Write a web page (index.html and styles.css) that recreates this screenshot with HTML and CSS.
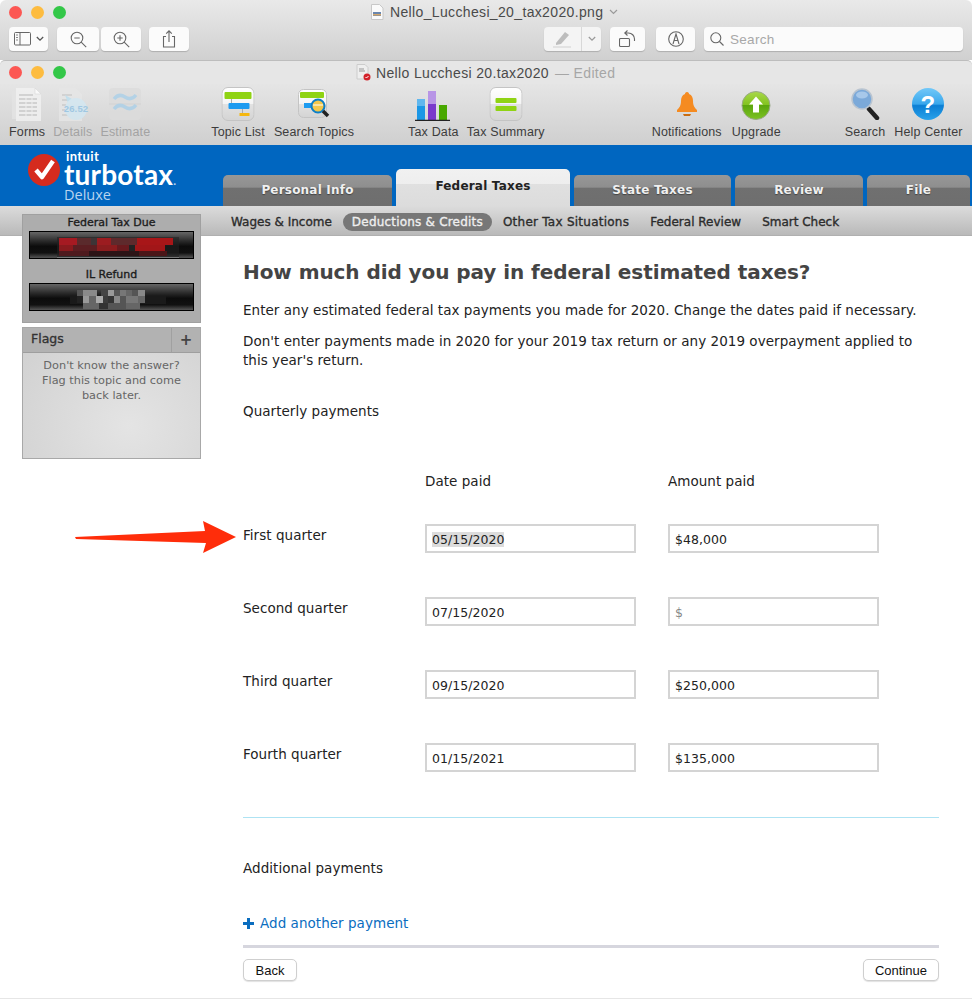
FILE: index.html
```html
<!DOCTYPE html>
<html lang="en">
  <head>
    <meta charset="UTF-8" />
    <meta name="viewport" content="width=device-width, initial-scale=1.0" />
    <title>Federal estimated taxes</title>
    <link rel="stylesheet" href="styles.css">
  </head>
  <body>
    <!-- back window: preview -->
    <div class="preview-window">
      <div class="title-row preview-title">
        <div class="lights"><i class="red"></i><i class="yellow"></i><i class="green"></i></div>
        <svg class="doc-icon" width="14" height="16" viewBox="0 0 14 16"><path d="M1.5 .5h8l3.500 3.500v11.500h-11.500z" fill="#fafafa" stroke="#c8c8c8"/><path d="M3 8h8v4H3z" fill="#6a86ad"/><path d="M3 10h8v1.500H3z" fill="#d4a76a"/></svg>
        <span class="title-text">Nello_Lucchesi_20_tax2020.png</span>
        <svg class="title-chevron" width="9" height="6" viewBox="0 0 9 6"><path d="M1 1l3.500 3.500L8 1" fill="none" stroke="#9a9a9a" stroke-width="1.200"/></svg>
      </div>
      <div class="preview-tools">
        <div class="btn btn-sidebar">
          <svg width="18" height="14" viewBox="0 0 18 14"><rect x=".5" y=".5" width="16" height="12.500" rx="1" fill="none" stroke="#666"/><path d="M6 .5v12.500" stroke="#666"/><path d="M2 3h2M2 5.500h2M2 8h2" stroke="#888"/></svg>
          <svg width="8" height="6" viewBox="0 0 8 6"><path d="M.8 1l3.200 3.200L7.200 1" fill="none" stroke="#555" stroke-width="1.300"/></svg>
        </div>
        <div class="btn btn-zoom-out">
          <svg width="17" height="17" viewBox="0 0 17 17"><circle cx="7" cy="7" r="5.800" fill="none" stroke="#666" stroke-width="1.100"/><path d="M11.200 11.200l5 5M4.300 7h5.400" stroke="#666" stroke-width="1.100"/></svg>
        </div>
        <div class="btn btn-zoom-in">
          <svg width="17" height="17" viewBox="0 0 17 17"><circle cx="7" cy="7" r="5.800" fill="none" stroke="#666" stroke-width="1.100"/><path d="M11.200 11.200l5 5M4.300 7h5.400M7 4.300v5.400" stroke="#666" stroke-width="1.100"/></svg>
        </div>
        <div class="btn btn-share">
          <svg width="14" height="18" viewBox="0 0 14 18"><path d="M4 6.500H1.500v10.500h11V6.500H10M7 12V1M4.200 3.600L7 .8l2.800 2.800" fill="none" stroke="#666" stroke-width="1.100"/></svg>
        </div>
        <div class="btn btn-markup">
          <span class="markup-pen">
            <svg width="19" height="17" viewBox="0 0 19 17"><path d="M3 12L12 1l4 3-8 9-5 1z" fill="#bdbdbd"/><path d="M0 16h18" stroke="#d0d0d0"/></svg>
          </span>
          <span class="markup-arrow">
            <svg width="8" height="6" viewBox="0 0 8 6"><path d="M.8 1l3.200 3.200L7.200 1" fill="none" stroke="#999" stroke-width="1.200"/></svg>
          </span>
        </div>
        <div class="btn btn-rotate">
          <svg width="17" height="18" viewBox="0 0 17 18"><rect x=".5" y="8.500" width="10" height="8" rx="1" fill="none" stroke="#666" stroke-width="1.100"/><path d="M6 3h3.500a6 6 0 0 1 6 6v2M8.500 .5L5.800 3l2.700 2.500" fill="none" stroke="#666" stroke-width="1.100"/></svg>
        </div>
        <div class="btn btn-annotate">
          <svg width="16" height="16" viewBox="0 0 16 16"><circle cx="8" cy="8" r="7.300" fill="none" stroke="#666" stroke-width="1.100"/><path d="M5 13L8 3l3 10M6.300 9.500h3.400" fill="none" stroke="#666" stroke-width="1.100"/></svg>
        </div>
        <div class="btn btn-search">
          <svg width="14" height="14" viewBox="0 0 14 14"><circle cx="5.800" cy="5.800" r="5" fill="none" stroke="#666" stroke-width="1.100"/><path d="M9.500 9.500l4 4" stroke="#666" stroke-width="1.100"/></svg>
          <span>Search</span>
        </div>
      </div>
    </div>

    <!-- front window: turbotax -->
    <div class="tax-window">
      <div class="title-row tax-title">
        <div class="lights"><i class="red"></i><i class="yellow"></i><i class="green"></i></div>
        <svg class="tax-doc" width="15" height="17" viewBox="0 0 15 17"><path d="M1 .5h8l3 3V15H1z" fill="#eee" stroke="#ccc"/><path d="M3 5h5M3 7h6" stroke="#999"/><circle cx="11" cy="13" r="3.500" fill="#d3222a"/><path d="M9.500 13l1 1 2-2" fill="none" stroke="#fff"/></svg>
        <span class="title-text">Nello Lucchesi 20.tax2020</span>
        <span class="title-edited">&mdash; Edited</span>
      </div>

      <div class="toolbar">
        <div class="tool-group group-a">
          <div class="tool off-forms">
            <svg width="32" height="36" viewBox="0 0 32 36"><path d="M1 5h20v28H1z" fill="#e4e4e4"/><path d="M5 2h19l6 6v27H5z" fill="#f2f2f2"/><path d="M24 2l6 6h-6z" fill="#fff" stroke="#ccc" stroke-width=".5"/><path d="M8 9h14M8 13h18M8 17h18M8 21h18M8 25h18M8 29h18" stroke="#cfcfcf" stroke-width="2"/><path d="M15 12v18M21 12v18" stroke="#f2f2f2"/></svg>
            <span>Forms</span>
          </div>
          <div class="tool off">
            <svg width="32" height="36" viewBox="0 0 32 36"><path d="M2 2h17l6 6v27H2z" fill="#e6e6e6"/><path d="M5 9h10M5 14h10M5 19h8M5 24h8M5 29h14" stroke="#cfcfcf" stroke-width="2"/><path d="M8 9l14 8-8 8z" fill="#bcdff0"/><circle cx="19" cy="23" r="11" fill="#d3e8f3"/><text class="icon-figure" x="19" y="26">26.52</text></svg>
            <span>Details</span>
          </div>
          <div class="tool off">
            <svg width="32" height="32" viewBox="0 0 32 32"><rect width="32" height="32" rx="4" fill="#dcdcdc"/><path d="M0 16h32" stroke="#d0d0d0"/><path d="M5 11c4-5 8-4 11-2s7 3 11-2M5 21c4-5 8-4 11-2s7 3 11-2" fill="none" stroke="#a9cfe8" stroke-width="3.500"/></svg>
            <span>Estimate</span>
          </div>
        </div>
        <div class="tool-group group-b">
          <div class="tool">
            <svg width="33" height="34" viewBox="0 0 33 34"><defs><linearGradient id="tile" x1="0" y1="0" x2="0" y2="1"><stop offset="0" stop-color="#fff"/><stop offset=".5" stop-color="#f4f4f4"/><stop offset=".5" stop-color="#e2e2e2"/><stop offset="1" stop-color="#d4d4d4"/></linearGradient></defs><rect x=".5" y=".5" width="32" height="33" rx="6" fill="url(#tile)" stroke="#c4c4c4"/><path d="M10 12v10M21 21v8" stroke="#aaa"/><rect x="3" y="5" width="27" height="7" rx="1" fill="#8fd313"/><rect x="7" y="16" width="21" height="6" rx="1" fill="#1d9bf0"/><rect x="18" y="26" width="10" height="3" fill="#f5b70f"/></svg>
            <span>Topic List</span>
          </div>
          <div class="tool tool-search-topics">
            <svg width="32" height="34" viewBox="0 0 32 34"><rect x=".5" y="2.500" width="28" height="28" rx="5" fill="url(#tile)" stroke="#c4c4c4"/><rect x="2" y="5" width="24" height="6" rx="1" fill="#8fd313"/><rect x="6" y="16" width="9" height="5" fill="#1d9bf0"/><circle cx="20" cy="19" r="6.500" fill="#f3c74a" stroke="#0d7fc7" stroke-width="2"/><path d="M15 18h10" stroke="#fff"/><path d="M25 24l5 5" stroke="#222" stroke-width="3.500"/></svg>
            <span>Search Topics</span>
          </div>
        </div>
        <div class="tool-group group-c">
          <div class="tool">
            <svg width="36" height="34" viewBox="0 0 36 34"><rect x="2" y="12" width="8" height="21" fill="#1b97e6"/><rect x="2" y="12" width="8" height="7" fill="#60b7ee"/><rect x="13" y="4" width="8" height="29" fill="#7a38cc"/><rect x="13" y="4" width="8" height="13" fill="#b895e6"/><rect x="24" y="18" width="8" height="15" fill="#48a800"/><path d="M0 33.500h35" stroke="#222" stroke-width="1.500"/></svg>
            <span>Tax Data</span>
          </div>
          <div class="tool">
            <svg width="33" height="34" viewBox="0 0 33 34"><rect x=".5" y=".5" width="32" height="33" rx="6" fill="url(#tile)" stroke="#c4c4c4"/><rect x="6" y="11" width="21" height="5" rx="1" fill="#8fd313"/><rect x="6" y="19" width="21" height="5" rx="1" fill="#8fd313"/></svg>
            <span>Tax Summary</span>
          </div>
        </div>
        <div class="tool-group group-d">
          <div class="tool">
            <svg width="24" height="28" viewBox="0 0 24 28"><path d="M12 2c-1.500 0-2 1-2 2-3 1-4 4-4 7 0 5-2 7-4 9v2h20v-2c-2-2-4-4-4-9 0-3-1-6-4-7 0-1-.5-2-2-2z" fill="#f58b21"/><path d="M8 24h8l-1 2H9z" fill="#c96d12"/></svg>
            <span>Notifications</span>
          </div>
          <div class="tool">
            <svg width="30" height="35" viewBox="0 -4 30 35"><defs><linearGradient id="up" x1="0" y1="0" x2="0" y2="1"><stop offset="0" stop-color="#a9d84a"/><stop offset=".5" stop-color="#80c21d"/><stop offset=".5" stop-color="#5ba60d"/><stop offset="1" stop-color="#7dc224"/></linearGradient></defs><circle cx="15" cy="15" r="14" fill="url(#up)" stroke="#9aa88a"/><path d="M15 6l7 8h-4v8h-6v-8H8z" fill="#fff"/></svg>
            <span>Upgrade</span>
          </div>
        </div>
        <div class="tool-group group-e">
          <div class="tool">
            <svg width="30" height="32" viewBox="0 0 30 32"><path d="M19 21l8 9" stroke="#222" stroke-width="4.500" stroke-linecap="round"/><circle cx="12" cy="11" r="10" fill="#7ba9d9" stroke="#b9c4d0" stroke-width="1.500"/><ellipse cx="12" cy="7" rx="6" ry="3.500" fill="#a7c8ea"/></svg>
            <span>Search</span>
          </div>
          <div class="tool">
            <svg width="33" height="33" viewBox="0 0 33 33"><defs><linearGradient id="help" x1="0" y1="0" x2="0" y2="1"><stop offset="0" stop-color="#72c8f8"/><stop offset=".5" stop-color="#39a7ec"/><stop offset=".55" stop-color="#0b7ed4"/><stop offset="1" stop-color="#2aa2ea"/></linearGradient></defs><circle cx="16.500" cy="16.500" r="16" fill="url(#help)"/><text class="icon-help" x="16.500" y="25">?</text></svg>
            <span>Help Center</span>
          </div>
        </div>
      </div>

      <header class="brand-bar">
        <div class="logo">
          <svg class="logo-mark" width="34" height="34" viewBox="0 0 34 34"><circle cx="17" cy="17" r="16" fill="#d52b1e"/><path d="M9 17l6 7L26 8" fill="none" stroke="#fff" stroke-width="4.500" stroke-linejoin="round"/></svg>
          <div class="logo-words">
            <span class="logo-intuit">intuit</span>
            <span class="logo-turbotax">turbotax<small>.</small></span>
            <span class="logo-edition">Deluxe</span>
          </div>
        </div>
        <nav class="tabs">
          <a class="tab tab-personal">Personal Info</a>
          <a class="tab tab-federal active">Federal Taxes</a>
          <a class="tab tab-state">State Taxes</a>
          <a class="tab tab-review">Review</a>
          <a class="tab tab-file">File</a>
        </nav>
      </header>

      <nav class="subnav">
        <a>Wages &amp; Income</a>
        <a class="current">Deductions &amp; Credits</a>
        <a class="other">Other Tax Situations</a>
        <a>Federal Review</a>
        <a>Smart Check</a>
      </nav>

      <div class="page">
        <aside class="sidebar">
          <div class="totals">
            <div class="total-label">Federal Tax Due</div>
            <div class="total-display">
              <svg width="122" height="21" viewBox="0 0 122 21">
                <rect width="122" height="20" fill="#222" opacity=".6"/>
                <rect x="2" y="1" width="18" height="7" fill="#a51a22"/><rect x="20" y="1" width="14" height="7" fill="#5a2a2c"/><rect x="34" y="1" width="6" height="7" fill="#3d3436"/>
                <rect x="40" y="1" width="14" height="7" fill="#9c1c20"/><rect x="54" y="1" width="26" height="7" fill="#5e2a2c"/><rect x="80" y="1" width="36" height="7" fill="#a81618"/>
                <rect x="2" y="8" width="14" height="6" fill="#8a1a1e"/><rect x="16" y="8" width="24" height="6" fill="#5a1e22"/><rect x="40" y="8" width="20" height="6" fill="#8c1c1e"/><rect x="60" y="8" width="12" height="6" fill="#6a1a1e"/><rect x="72" y="8" width="6" height="6" fill="#222"/><rect x="78" y="8" width="30" height="6" fill="#a21618"/>
                <rect x="2" y="14" width="30" height="5" fill="#4e1a1e"/><rect x="32" y="14" width="50" height="5" fill="#2c1416"/><rect x="82" y="14" width="28" height="5" fill="#4a1618"/>
                <rect y="20" width="122" height="1" fill="#777"/>
              </svg>
            </div>
            <div class="total-label refund-label">IL Refund</div>
            <div class="total-display">
              <svg width="96" height="20" viewBox="0 0 96 20">
                <rect x="0" y="6" width="96" height="8" fill="#1a1a1a"/>
                <rect x="7" y="0" width="6" height="6" fill="#555"/><rect x="13" y="0" width="14" height="6" fill="#8a8a8a"/><rect x="31" y="0" width="7" height="6" fill="#444"/><rect x="38" y="0" width="6" height="6" fill="#999"/><rect x="44" y="0" width="6" height="6" fill="#555"/><rect x="50" y="0" width="6" height="6" fill="#777"/><rect x="56" y="0" width="6" height="6" fill="#666"/><rect x="68" y="0" width="7" height="6" fill="#888"/><rect x="62" y="0" width="6" height="6" fill="#555"/>
                <rect x="7" y="6" width="6" height="7" fill="#222"/><rect x="13" y="6" width="6" height="7" fill="#999"/><rect x="19" y="6" width="7" height="7" fill="#666"/><rect x="26" y="6" width="7" height="7" fill="#aaa"/><rect x="33" y="6" width="5" height="7" fill="#3c3c3c"/><rect x="38" y="6" width="6" height="7" fill="#333"/><rect x="44" y="6" width="6" height="7" fill="#888"/><rect x="50" y="6" width="6" height="7" fill="#555"/><rect x="56" y="6" width="12" height="7" fill="#777"/><rect x="68" y="6" width="7" height="7" fill="#666"/>
                <rect x="13" y="13" width="16" height="6" fill="#666"/><rect x="29" y="13" width="9" height="6" fill="#333"/><rect x="38" y="13" width="18" height="6" fill="#555"/><rect x="56" y="13" width="14" height="6" fill="#666"/>
              </svg>
            </div>
          </div>
          <div class="flags">
            <div class="flags-head">
              <span class="flags-title">Flags</span>
              <span class="flags-add">+</span>
            </div>
            <p>Don't know the answer? Flag this topic and come back later.</p>
          </div>
        </aside>

        <main class="content">
          <h1>How much did you pay in federal estimated taxes?</h1>
          <p class="intro">Enter any estimated federal tax payments you made for 2020. Change the dates paid if necessary.</p>
          <p class="intro second">Don't enter payments made in 2020 for your 2019 tax return or any 2019 overpayment applied to this year's return.</p>
          <h2 class="section quarterly">Quarterly payments</h2>

          <div class="quarter-heads">
            <div class="col-head head-date">Date paid</div>
            <div class="col-head">Amount paid</div>
          </div>
          <div class="quarters">
            <div class="quarter-name">First quarter</div>
            <div class="field"><span class="selected">05/15/2020</span></div>
            <div class="field">$48,000</div>

            <div class="quarter-name">Second quarter</div>
            <div class="field">07/15/2020</div>
            <div class="field placeholder">$</div>

            <div class="quarter-name">Third quarter</div>
            <div class="field">09/15/2020</div>
            <div class="field">$250,000</div>

            <div class="quarter-name">Fourth quarter</div>
            <div class="field">01/15/2021</div>
            <div class="field">$135,000</div>
          </div>

          <hr class="divider" />
          <h2 class="section additional">Additional payments</h2>
          <a class="add-link">
            <svg width="11" height="11" viewBox="0 0 11 11"><path d="M4 0h3v4h4v3H7v4H4V7H0V4h4z" fill="#0a6dbf"/></svg>
            <span>Add another payment</span>
          </a>
          <hr class="footer-rule" />
          <div class="actions">
            <button type="button">Back</button>
            <button type="button" class="btn-continue">Continue</button>
          </div>
        </main>
      </div>

      <svg class="pointer" width="164" height="36" viewBox="0 0 164 36"><path d="M1 18L131 12 129 2l33 16-33 16 3-10L2 20z" fill="#ff2d0a"/></svg>
    </div>
  </body>
</html>
```

FILE: styles.css
```css
html,
body {
  margin: 0;
  padding: 0;
}
body {
  width: 972px;
  height: 999px;
  overflow: hidden;
  background: #fff;
  font-family: "DejaVu Sans", sans-serif;
  color: #222;
}

/* window chrome */
.preview-window {
  height: 60px;
  box-sizing: border-box;
  background: linear-gradient(#e9e9e9, #d0d0d0);
  border-radius: 6px 6px 0 0;
  font-family: "Liberation Sans", Arial, sans-serif;
}
.title-row {
  height: 24px;
  display: flex;
  align-items: center;
  position: relative;
  font-family: "Liberation Sans", Arial, sans-serif;
  font-size: 14px;
  letter-spacing: 0.35px;
  color: #4a4a4a;
}
.lights {
  display: flex;
  gap: 9px;
  padding-left: 9px;
}
.lights i {
  display: block;
  width: 13px;
  height: 13px;
  border-radius: 50%;
}
.lights .red {
  background: #fc5753;
}
.lights .yellow {
  background: #fdbc40;
}
.lights .green {
  background: #33c748;
}
.doc-icon {
  margin-left: 304px;
}
.preview-title .title-text {
  margin-left: 6px;
}
.title-chevron {
  margin-left: 6px;
}
.tax-doc {
  margin-left: 290px;
}
.tax-title .title-text {
  margin-left: 5px;
}
.title-edited {
  margin-left: 6px;
  color: #a6a6a6;
}

.preview-tools {
  display: flex;
  padding: 3px 0 0 9px;
}
.btn {
  height: 24px;
  box-sizing: border-box;
  background: #fbfbfb;
  border-radius: 4px;
  box-shadow: 0 1px 1px rgba(0, 0, 0, 0.18);
  display: flex;
  align-items: center;
  justify-content: center;
}
.btn-sidebar {
  width: 39px;
  gap: 4px;
}
.btn-zoom-out {
  width: 42px;
  margin-left: 9px;
}
.btn-zoom-in {
  width: 40px;
  margin-left: 2px;
}
.btn-share {
  width: 40px;
  margin-left: 8px;
}
.btn-markup {
  width: 57px;
  margin-left: 355px;
  background: #f4f4f4;
}
.markup-pen {
  width: 37px;
  height: 24px;
  display: flex;
  align-items: center;
  justify-content: center;
  border-right: 1px solid #d8d8d8;
}
.markup-arrow {
  flex: 1;
  display: flex;
  justify-content: center;
}
.btn-rotate {
  width: 35px;
  margin-left: 9px;
}
.btn-annotate {
  width: 39px;
  margin-left: 11px;
}
.btn-search {
  width: 259px;
  margin-left: 9px;
  justify-content: flex-start;
  padding-left: 6px;
  gap: 6px;
  font-size: 13.5px;
  letter-spacing: 0.3px;
  color: #a8a8a8;
}

.tax-window {
  position: relative;
  height: 939px;
  background: #fff;
  border-bottom: 1px solid #e6e6e6;
  box-sizing: border-box;
}
.tax-title {
  background: #e6e6e6;
  border-top: 1px solid #bdbdbd;
  border-radius: 5px 5px 0 0;
  box-sizing: border-box;
}
.toolbar {
  height: 61px;
  box-sizing: border-box;
  display: flex;
  background: linear-gradient(#e5e5e5, #cfcfcf);
  font-family: "Liberation Sans", Arial, sans-serif;
  font-size: 12.5px;
  letter-spacing: 0.15px;
  color: #3c3c3c;
}
.tool-group {
  display: flex;
  gap: 9px;
}
.tool {
  display: flex;
  flex-direction: column;
  align-items: center;
  position: relative;
  height: 61px;
  justify-content: flex-end;
  padding-bottom: 5px;
  box-sizing: border-box;
}
.tool svg {
  position: absolute;
  left: 50%;
  top: 20px;
  transform: translate(-50%, -50%);
}
.tool span {
  line-height: 15px;
  white-space: nowrap;
}
.group-a {
  margin-left: 9px;
  gap: 8px;
}
.group-b {
  margin-left: 61px;
}
.group-c {
  margin-left: 54px;
  gap: 8px;
}
.group-d {
  margin-left: 107px;
  gap: 10px;
}
.group-e {
  margin-left: 64px;
}
.off span {
  color: #a3a3a3;
}
.off svg,
.off-forms svg {
  opacity: 0.8;
}
.icon-figure {
  font-family: "Liberation Sans", Arial, sans-serif;
  font-size: 9.500px;
  font-weight: bold;
  fill: #92c3e4;
  text-anchor: middle;
}
.icon-help {
  font-family: "Liberation Sans", Arial, sans-serif;
  font-size: 24px;
  font-weight: bold;
  fill: #fff;
  text-anchor: middle;
}

/* blue header */
.brand-bar {
  height: 61px;
  background: #0066c0;
  display: flex;
  align-items: flex-end;
}
.logo {
  width: 223px;
  height: 61px;
  display: flex;
  position: relative;
  color: #fff;
}
.logo-mark {
  margin: 8px 0 0 27px;
}
.logo-words {
  margin-left: 3px;
  display: flex;
  flex-direction: column;
  font-family: "Lato", sans-serif;
}
.logo-intuit {
  margin: 6px 0 0 2px;
  font-size: 13px;
  line-height: 11px;
  font-weight: bold;
  letter-spacing: 0.4px;
}
.logo-turbotax {
  font-size: 28px;
  line-height: 24px;
  font-weight: bold;
  letter-spacing: 0.2px;
}
.logo-turbotax small {
  font-size: 12px;
  line-height: 0;
  color: #b9d4ef;
}
.logo-edition {
  font-family: "Open Sans", sans-serif;
  font-size: 14.5px;
  line-height: 17px;
  color: #b9d4ef;
}
.tabs {
  display: flex;
  align-items: flex-end;
  gap: 4px;
}
.tab {
  height: 31px;
  box-sizing: border-box;
  border-radius: 5px 5px 0 0;
  background: linear-gradient(#979797 0, #8e8e8e 40%, #707070 41%, #6e6e6e 100%);
  color: #f0f0f0;
  font-size: 12px;
  font-weight: bold;
  line-height: 30px;
  text-align: center;
  letter-spacing: 0.2px;
  text-shadow: 0 1px 1px #444;
}
.tab-personal {
  width: 169px;
}
.tab-federal {
  width: 174px;
}
.tab-state {
  width: 157px;
}
.tab-review {
  width: 128px;
}
.tab-file {
  width: 103px;
}
.tab.active {
  height: 37px;
  background: linear-gradient(#f1f1f1 0, #eeeeee 40%, #e0e0e0 41%, #dcdcdc 100%);
  color: #222;
  line-height: 35px;
  text-shadow: none;
}

.subnav {
  height: 30px;
  box-sizing: border-box;
  display: flex;
  align-items: center;
  padding: 3px 0 0 231px;
  background: linear-gradient(#dcdcdc, #b9b9b9);
  border-bottom: 1px solid #b0b0b0;
  font-size: 12px;
  -webkit-text-stroke: 0.35px #2c2c2c;
  color: #2c2c2c;
}
.subnav a {
  margin-right: 21px;
  white-space: nowrap;
}
.subnav .current {
  margin: 0 11px 0 -10px;
  height: 18px;
  line-height: 18px;
  padding: 0 9px;
  border-radius: 9px;
  background: #777;
  color: #eee;
  letter-spacing: 0.2px;
  -webkit-text-stroke: 0.35px #eee;
}
.subnav .other {
  letter-spacing: 0.25px;
}

/* left column */
.page {
  display: flex;
}
.sidebar {
  width: 179px;
  margin: -22px 0 0 22px;
  position: relative;
}
.totals {
  height: 109px;
  box-sizing: border-box;
  background: #adadad;
  border: 1px solid #a0a0a0;
  padding: 0 6px;
}
.total-label {
  text-align: center;
  font-size: 11px;
  -webkit-text-stroke: 0.35px #1c1c1c;
  line-height: 16px;
  color: #1c1c1c;
}
.refund-label {
  margin-top: 7px;
  line-height: 17px;
}
.total-display {
  height: 28px;
  box-sizing: border-box;
  border: 1px solid #000;
  padding-left: 12px;
  background: linear-gradient(#666 0, #2a2a2a 35%, #0c0c0c 55%, #111 80%, #555 100%);
  display: flex;
  align-items: flex-end;
  justify-content: center;
}
.flags {
  margin-top: 4px;
  height: 132px;
  box-sizing: border-box;
  border: 1px solid #a8a8a8;
  background: radial-gradient(ellipse at 60% 75%, #e4e4e4 0, #cfcfcf 100%);
}
.flags-head {
  height: 24px;
  display: flex;
  justify-content: space-between;
  background: #b2b2b2;
  border-bottom: 1px solid #9e9e9e;
  color: #333;
}
.flags-title {
  font-size: 12.5px;
  -webkit-text-stroke: 0.35px #333;
  line-height: 22px;
  padding-left: 8px;
}
.flags-add {
  width: 28px;
  text-align: center;
  border-left: 1px solid #a0a0a0;
  font-size: 15px;
  font-weight: bold;
  line-height: 24px;
  color: #444;
}
.flags p {
  margin: 5px auto 0;
  width: 150px;
  text-align: center;
  font-size: 11.3px;
  line-height: 15px;
  color: #666;
}

/* question */
.content {
  width: 696px;
  margin-left: 42px;
  font-size: 13.5px;
  letter-spacing: 0.04px;
}
h1 {
  margin: 23px 0 0;
  font-size: 20px;
  line-height: 26px;
  font-weight: bold;
  letter-spacing: -0.07px;
  color: #444;
}
.intro {
  margin: 16px 0 0;
  max-width: 680px;
  line-height: 19px;
  color: #222;
}
.intro.second {
  margin-top: 12px;
}
.section {
  margin: 0;
  font-size: 13.5px;
  font-weight: normal;
  line-height: 18px;
}
.quarterly {
  margin-top: 32px;
}
.quarter-heads {
  margin-top: 52px;
  display: grid;
  grid-template-columns: 182px 243px 211px;
}
.col-head {
  line-height: 18px;
}
.head-date {
  grid-column: 2;
}
.quarters {
  margin-top: 34px;
  display: grid;
  grid-template-columns: 182px 243px 211px;
  grid-auto-rows: 29px;
  row-gap: 44px;
}
.quarter-name {
  line-height: 22px;
}
.field {
  width: 211px;
  height: 29px;
  box-sizing: border-box;
  border: 2px solid #d4d4d4;
  padding-left: 5px;
  font-size: 12.5px;
  line-height: 27px;
}
.selected {
  background: #dcdcdc;
}
.placeholder {
  color: #888;
}
.divider {
  margin: 45px 0 0;
  border: 0;
  border-top: 1px solid #aee3f3;
}
.additional {
  margin-top: 41px;
}
.add-link {
  display: flex;
  align-items: center;
  gap: 6px;
  margin-top: 37px;
  line-height: 18px;
  color: #0a6dbf;
}
.footer-rule {
  margin: 13px 0 0;
  border: 0;
  height: 3px;
  background: #d6d6de;
}
.actions {
  margin-top: 11px;
  display: flex;
  justify-content: space-between;
}
.actions button {
  width: 54px;
  height: 22px;
  padding: 0;
  background: #fff;
  border: 1px solid #cfcfcf;
  border-radius: 5px;
  box-shadow: 0 1px 1px rgba(0, 0, 0, 0.12);
  font-family: "Liberation Sans", Arial, sans-serif;
  font-size: 13px;
  color: #111;
}
.actions .btn-continue {
  width: 76px;
}

/* annotation drawn on the screenshot */
.pointer {
  position: absolute;
  left: 74px;
  top: 459px;
}
```
